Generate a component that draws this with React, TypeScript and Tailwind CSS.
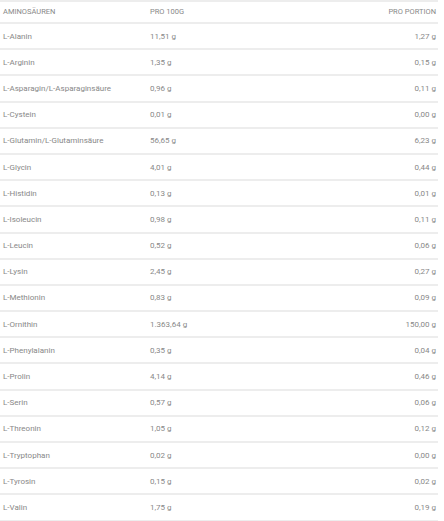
const rows: [string, string, string][] = [
  ['L-Alanin', '11,51 g', '1,27 g'],
  ['L-Arginin', '1,35 g', '0,15 g'],
  ['L-Asparagin/L-Asparaginsäure', '0,96 g', '0,11 g'],
  ['L-Cystein', '0,01 g', '0,00 g'],
  ['L-Glutamin/L-Glutaminsäure', '56,65 g', '6,23 g'],
  ['L-Glycin', '4,01 g', '0,44 g'],
  ['L-Histidin', '0,13 g', '0,01 g'],
  ['L-Isoleucin', '0,98 g', '0,11 g'],
  ['L-Leucin', '0,52 g', '0,06 g'],
  ['L-Lysin', '2,45 g', '0,27 g'],
  ['L-Methionin', '0,83 g', '0,09 g'],
  ['L-Ornithin', '1.363,64 g', '150,00 g'],
  ['L-Phenylalanin', '0,35 g', '0,04 g'],
  ['L-Prolin', '4,14 g', '0,46 g'],
  ['L-Serin', '0,57 g', '0,06 g'],
  ['L-Threonin', '1,05 g', '0,12 g'],
  ['L-Tryptophan', '0,02 g', '0,00 g'],
  ['L-Tyrosin', '0,15 g', '0,02 g'],
  ['L-Valin', '1,75 g', '0,19 g'],
];

export default function App() {
  return (
    <div className="w-[444px] h-[521px] overflow-hidden bg-white text-[#888] text-[8px] font-['Roboto',sans-serif]">
      <div className="w-[438px] border-t-2 border-[#ededed]">
        <div className="flex items-center h-[22px] border-b-2 border-[#ededed] uppercase text-[7.5px]">
          <div className="w-[150px] pl-[3px]">Aminosäuren</div>
          <div className="flex-1">Pro 100g</div>
          <div className="pr-[2px]">Pro Portion</div>
        </div>
        {rows.map(([name, per100, perPortion]) => (
          <div key={name} className="flex items-center h-[26.2px] pt-px border-b-2 border-[#ededed]">
            <div className="w-[150px] pl-[3px]">{name}</div>
            <div className="flex-1">{per100}</div>
            <div className="pr-[2px]">{perPortion}</div>
          </div>
        ))}
      </div>
    </div>
  );
}
